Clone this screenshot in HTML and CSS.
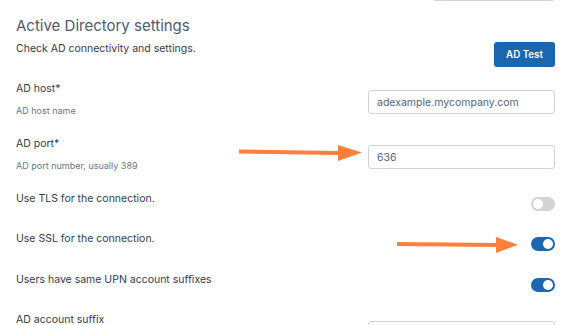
FILE: index.html
```html
<!DOCTYPE html>
<html lang="en">
<head>
  <meta charset="UTF-8">
  <meta name="viewport" content="width=device-width, initial-scale=1.0">
  <title>Active Directory settings</title>
  <link rel="stylesheet" href="styles.css">
</head>
<body>
  <div class="settings">
    <div class="prev-row">
      <input class="text-input short" type="text">
    </div>

    <header class="section-header">
      <h2>Active Directory settings</h2>
      <div class="section-bar">
        <p>Check AD connectivity and settings.</p>
        <button class="btn-primary">AD Test</button>
      </div>
    </header>

    <div class="field">
      <div class="field-text">
        <label>AD host*</label>
        <span class="hint">AD host name</span>
      </div>
      <input class="text-input" type="text" value="adexample.mycompany.com">
    </div>

    <div class="field">
      <div class="field-text">
        <label>AD port*</label>
        <span class="hint">AD port number, usually 389</span>
      </div>
      <input class="text-input" type="text" value="636">
    </div>

    <div class="field toggle-row">
      <label>Use TLS for the connection.</label>
      <label class="switch"><input type="checkbox"><span class="slider"></span></label>
    </div>

    <div class="field toggle-row">
      <label>Use SSL for the connection.</label>
      <label class="switch"><input type="checkbox" checked><span class="slider"></span></label>
    </div>

    <div class="field toggle-row">
      <label>Users have same UPN account suffixes</label>
      <label class="switch"><input type="checkbox" checked><span class="slider"></span></label>
    </div>

    <div class="field last">
      <div class="field-text">
        <label>AD account suffix</label>
      </div>
      <input class="text-input" type="text">
    </div>
  </div>

  <!-- annotation arrows drawn over the form -->
  <svg class="annotations" width="573" height="325" viewBox="0 0 573 325">
    <g fill="#ff7f3d" stroke="#ff7f3d">
      <line x1="239" y1="151.5" x2="341" y2="153" stroke-width="4" />
      <polygon points="338,145 362,152.5 338,161" stroke="none" />
      <line x1="397" y1="244" x2="498" y2="245" stroke-width="4" />
      <polygon points="496,237 518,244.7 496,253" stroke="none" />
    </g>
  </svg>
</body>
</html>
```

FILE: styles.css
```css
:root {
  --primary: #1a67b0;
  --text: #333c4d;
  --title: #4f5a6d;
  --muted: #6b768a;
  --border: #cfd3d8;
}

* {
  box-sizing: border-box;
}

body {
  margin: 0;
  background: #fff;
  color: var(--text);
  font-family: 'Inter', 'Noto Sans', sans-serif;
  width: 573px;
  height: 325px;
  overflow: hidden;
  position: relative;
}

.settings {
  padding: 0 18px 0 16px;
}

.prev-row {
  display: flex;
  justify-content: flex-end;
  height: 2px;
}

.text-input {
  width: 187px;
  height: 24px;
  margin-top: 9px;
  padding: 0 8px;
  border: 1px solid var(--border);
  border-radius: 3px;
  font-family: inherit;
  font-size: 10.5px;
  color: #5a6578;
  background: #fff;
  outline: none;
}

.text-input.short {
  width: 122px;
  height: 25px;
  margin-top: -24px;
}

.section-header h2 {
  margin: 13px 0 0;
  font-size: 15px;
  font-weight: 400;
  line-height: 22px;
  color: var(--title);
}

.section-bar {
  display: flex;
  justify-content: space-between;
  align-items: flex-start;
  margin-top: 3px;
  margin-bottom: 14px;
}

.section-bar p {
  margin: 0;
  font-size: 10.5px;
  line-height: 18px;
}

.btn-primary {
  margin-top: 2px;
  width: 61px;
  height: 25px;
  border: none;
  border-radius: 3px;
  background: var(--primary);
  color: #fff;
  font-family: inherit;
  font-size: 9.75px;
  font-weight: 600;
  cursor: pointer;
}

.field {
  display: flex;
  justify-content: space-between;
  align-items: flex-start;
  height: 55px;
}

.field.last {
  height: 13px;
}

.field-text {
  display: flex;
  flex-direction: column;
}

.field label {
  font-size: 10.5px;
  line-height: 16px;
}

.hint {
  margin-top: 8px;
  font-size: 9px;
  line-height: 12px;
  color: var(--muted);
}

.toggle-row {
  height: 40.3px;
}

.switch {
  position: relative;
  display: inline-block;
  width: 24px;
  height: 14px;
  margin-top: 6px;
}

.switch input {
  display: none;
}

.slider {
  position: absolute;
  inset: 0;
  border-radius: 7px;
  background: #d3d3d3;
}

.slider::before {
  content: '';
  position: absolute;
  top: 2px;
  left: 2px;
  width: 10px;
  height: 10px;
  border-radius: 50%;
  background: #fff;
}

.switch input:checked + .slider {
  background: var(--primary);
}

.switch input:checked + .slider::before {
  left: 12px;
}

.annotations {
  position: absolute;
  top: 0;
  left: 0;
  pointer-events: none;
}
```
